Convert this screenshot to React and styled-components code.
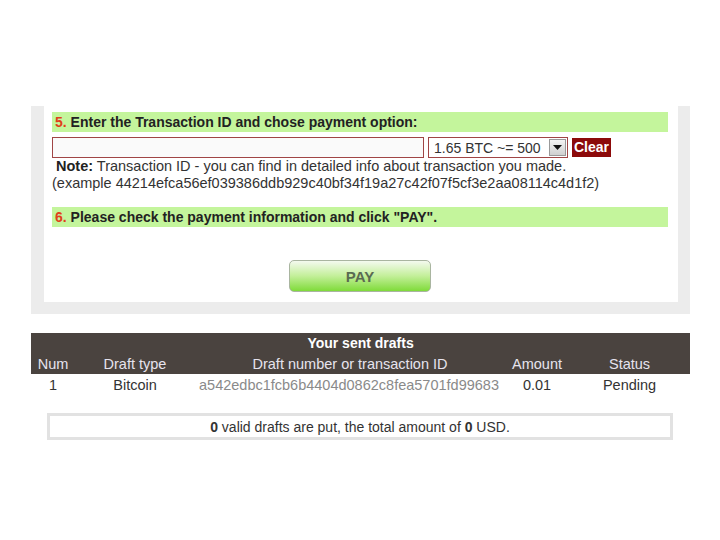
import React, { useState } from "react";
import styled, { createGlobalStyle } from "styled-components";

const GlobalStyle = createGlobalStyle`
  html, body {
    margin: 0;
    padding: 0;
    background: #fff;
  }
  body {
    font-family: "Liberation Sans", Arial, sans-serif;
    font-size: 14px;
    color: #333;
  }
`;

const Page = styled.div`
  width: 720px;
  height: 540px;
  padding-top: 106px;
  box-sizing: border-box;
`;

const Panel = styled.div`
  margin-left: 31px;
  width: 659px;
  box-sizing: border-box;
  background: #ececec;
  padding: 0 12px 12px 13px;
`;

const Inner = styled.div`
  background: #fff;
  padding: 6px 10px 10px 8px;
`;

const StepBar = styled.div`
  background: #c4f59c;
  height: 20px;
  line-height: 20px;
  padding-left: 3px;
  font-weight: bold;
  color: #222;
  span {
    color: #e0401a;
  }
`;

const InputRow = styled.div`
  display: flex;
  align-items: center;
  gap: 4px;
  margin-top: 5px;
`;

const TxInput = styled.input`
  width: 372px;
  height: 21px;
  box-sizing: border-box;
  border: 1px solid #a04545;
  background: #fafafa;
  font: inherit;
  padding: 0 4px;
`;

const SelectBox = styled.div`
  width: 140px;
  height: 21px;
  box-sizing: border-box;
  border: 1px solid #a04545;
  display: flex;
  align-items: center;
  justify-content: space-between;
  padding: 0 1px 0 5px;
  color: #333;
  background: #fff;
`;

const Arrow = styled.div`
  width: 17px;
  height: 17px;
  box-sizing: border-box;
  border: 1px solid #999;
  background: linear-gradient(#f4f4f4, #cfcfcf);
  display: flex;
  align-items: center;
  justify-content: center;
`;

const ClearButton = styled.button`
  background: #8c0a0a;
  color: #fff;
  border: none;
  font: inherit;
  font-weight: bold;
  font-size: 14px;
  height: 19px;
  padding: 0 2px;
  line-height: 19px;
  cursor: pointer;
`;

const Note = styled.div`
  line-height: 17px;
  font-size: 14.5px;
  color: #333;
  b {
    color: #222;
  }
`;

const NoteLine = styled.div`
  padding-left: ${(p) => (p.indent ? "4px" : "0")};
`;

const Step6 = styled(StepBar)`
  margin-top: 15px;
`;

const PayWrap = styled.div`
  display: flex;
  justify-content: center;
  margin-top: 33px;
`;

const PayButton = styled.button`
  width: 142px;
  height: 32px;
  border: 1px solid #a9b5a0;
  border-radius: 5px;
  background: linear-gradient(#f4faef 0%, #c3ef99 50%, #7fdb3a 100%);
  color: #5a6a52;
  font: inherit;
  font-weight: bold;
  font-size: 15px;
  cursor: pointer;
`;

const Drafts = styled.table`
  margin: 19px 0 0 31px;
  width: 659px;
  border-collapse: collapse;
  table-layout: fixed;
  text-align: center;
`;

const Col = styled.col`
  width: ${(p) => p.w}px;
`;

const TitleCell = styled.th`
  background: #4a433f;
  color: #fff;
  font-weight: bold;
  height: 20px;
  padding: 0;
`;

const HeadCell = styled.th`
  background: #4a433f;
  color: #e6e3ee;
  font-weight: normal;
  font-size: 14.5px;
  height: 21px;
  padding: 0;
  white-space: nowrap;
`;

const Cell = styled.td`
  height: 22px;
  padding: ${(p) => (p.clip ? "0 0 0 4px" : "0")};
  font-size: 14.5px;
  color: ${(p) => (p.muted ? "#8a8a8a" : "#333")};
  overflow: hidden;
  white-space: nowrap;
  text-align: ${(p) => (p.clip ? "left" : "center")};
`;

const Summary = styled.div`
  margin: 17px 0 0 47px;
  width: 626px;
  height: 27px;
  box-sizing: border-box;
  border: 3px solid #e2e2e2;
  display: flex;
  align-items: center;
  justify-content: center;
  color: #333;
`;

export default function App() {
  const [txId, setTxId] = useState("");
  return (
    <Page>
      <GlobalStyle />
      <Panel>
        <Inner>
          <StepBar>
            <span>5.</span> Enter the Transaction ID and chose payment option:
          </StepBar>
          <InputRow>
            <TxInput value={txId} onChange={(e) => setTxId(e.target.value)} />
            <SelectBox>
              1.65 BTC ~= 500
              <Arrow>
                <svg width="9" height="5" viewBox="0 0 9 5">
                  <path d="M0 0h9L4.5 5z" fill="#111" />
                </svg>
              </Arrow>
            </SelectBox>
            <ClearButton onClick={() => setTxId("")}>Clear</ClearButton>
          </InputRow>
          <Note>
            <NoteLine indent>
              <b>Note:</b> Transaction ID - you can find in detailed info about transaction you made.
            </NoteLine>
            <NoteLine>(example 44214efca56ef039386ddb929c40bf34f19a27c42f07f5cf3e2aa08114c4d1f2)</NoteLine>
          </Note>
          <Step6>
            <span>6.</span> Please check the payment information and click "PAY".
          </Step6>
          <PayWrap>
            <PayButton>PAY</PayButton>
          </PayWrap>
        </Inner>
      </Panel>

      <Drafts>
        <colgroup>
          <Col w={44} />
          <Col w={120} />
          <Col w={310} />
          <Col w={64} />
          <Col w={121} />
        </colgroup>
        <thead>
          <tr>
            <TitleCell colSpan={5}>Your sent drafts</TitleCell>
          </tr>
          <tr>
            <HeadCell>Num</HeadCell>
            <HeadCell>Draft type</HeadCell>
            <HeadCell>Draft number or transaction ID</HeadCell>
            <HeadCell>Amount</HeadCell>
            <HeadCell>Status</HeadCell>
          </tr>
        </thead>
        <tbody>
          <tr>
            <Cell>1</Cell>
            <Cell>Bitcoin</Cell>
            <Cell muted clip>a542edbc1fcb6b4404d0862c8fea5701fd99683</Cell>
            <Cell>0.01</Cell>
            <Cell>Pending</Cell>
          </tr>
        </tbody>
      </Drafts>

      <Summary>
        <b>0</b>&nbsp;valid drafts are put, the total amount of&nbsp;<b>0</b>&nbsp;USD.
      </Summary>
    </Page>
  );
}
